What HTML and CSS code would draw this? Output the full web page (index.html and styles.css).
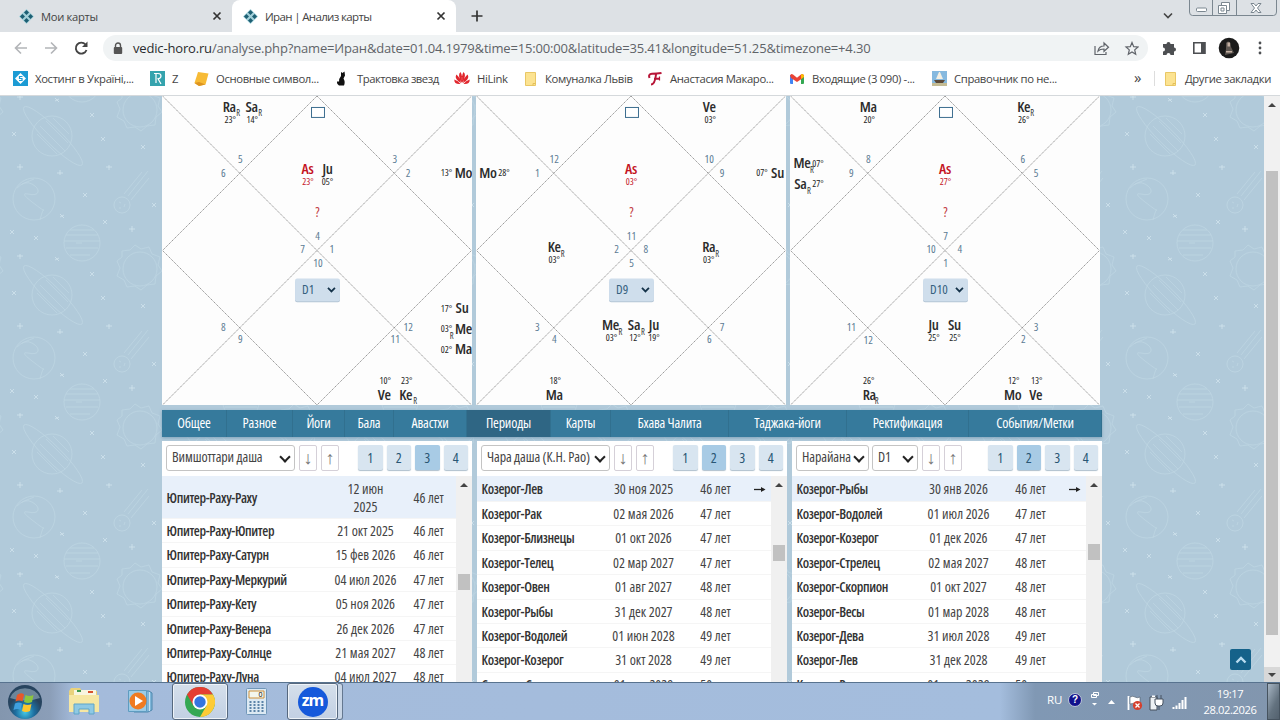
FILE: index.html
```html
<!DOCTYPE html>
<html lang="ru">
<head>
    <meta charset="UTF-8">
    <meta name="viewport" content="width=device-width, initial-scale=1.0">
    <title>Иран | Анализ карты</title>
    <link rel="stylesheet" href="styles.css">
</head>
<body>
    <!-- Общие символы -->
    <svg width="0" height="0" class="defs">
        <symbol id="favicon" viewBox="0 0 16 16">
            <path d="M8 0l8 8-8 8-8-8z" fill="#a3d0d9"/>
            <path d="M8 1l2.700 2.700L8 6.400 5.300 3.700zM3.700 5.300L6.400 8l-2.700 2.700L1 8zM12.300 5.300L15 8l-2.700 2.700L9.600 8zM8 9.600l2.700 2.700L8 15l-2.700-2.700z" fill="#1d5f73"/>
        </symbol>
        <symbol id="close" viewBox="0 0 10 10">
            <path d="M1.500 1.500l7 7M8.500 1.500l-7 7" stroke="#333" stroke-width="1.700"/>
        </symbol>
        <symbol id="note" viewBox="0 0 14 14">
            <path d="M1.500.5h10v13h-10z" fill="#fce391" stroke="#e9c765"/>
            <path d="M9 13.500v-2h2.500" fill="none" stroke="#e3bf58"/>
        </symbol>
        <symbol id="grid" viewBox="0 0 310 310">
            <path d="M0 0L310 310M310 0L0 310M155 0L310 155L155 310L0 155Z" fill="none" stroke="#808080" stroke-width=".8" stroke-dasharray="1.500 .7"/>
            <rect x="149.500" y="11.500" width="13" height="10" fill="#fff" stroke="#3c6d8f"/>
            <rect x="133" y="185" width="45" height="22" rx="2" fill="#b5c6d6"/>
            <rect x="133" y="183" width="45" height="23" rx="2" fill="#cfdeec"/>
            <path d="M166 192.500l3.500 3.500 3.500-3.500" fill="none" stroke="#15334a" stroke-width="1.800"/>
        </symbol>
    </svg>

    <!-- Вкладки -->
    <header class="tabs">
        <div class="tab tab-first"><svg width="15" height="15"><use href="#favicon"/></svg><span>Мои карты</span><svg class="x" width="10" height="10"><use href="#close"/></svg></div>
        <div class="tab active"><svg width="15" height="15"><use href="#favicon"/></svg><span>Иран | Анализ карты</span><svg class="x" width="10" height="10"><use href="#close"/></svg></div>
        <svg class="plus" width="12" height="12"><path d="M6 .5v11M.5 6h11" stroke="#333" stroke-width="1.700"/></svg>
        <svg class="chev" width="10" height="8"><path d="M1 1.500l4 4 4-4" fill="none" stroke="#444" stroke-width="1.600"/></svg>
        <svg class="winctl" width="88" height="16" fill="none" stroke="#7b8790">
            <path d="M.5 0v12q0 3.500 3 3.500h81q3 0 3-3.500V0M23.500 0v15M47.500 0v15"/>
            <rect x="7.500" y="8" width="10" height="3.500" rx="1" fill="#fff"/>
            <path d="M32.500 5V2.500h8v8H38M29.500 5.500h8v8h-8zM32 8h3v3h-3z" fill="#fff"/>
            <path d="M62 3.500h3l2 2.500 2-2.500h3l-3.500 4.500 3.500 4.500h-3l-2-2.500-2 2.500h-3l3.500-4.500z" fill="#fff"/>
        </svg>
    </header>

    <!-- Адресная строка -->
    <div class="toolbar">
        <svg class="nav" width="76" height="16" fill="none" stroke-width="1.600">
            <path d="M13 8H1.500M7 2.500L1.500 8 7 13.500M31 8h11.500M37 2.500L42.500 8 37 13.500" stroke="#b3b5b8"/>
            <path d="M71.500 4.500A5.500 5.500 0 1 0 72.500 10" stroke="#444" stroke-width="1.900"/>
            <path d="M73.500 1.500v5.500H68z" fill="#444"/>
        </svg>
        <div class="address">
            <svg width="10" height="13"><path d="M2.500 6V3.500a2.500 2.500 0 0 1 5 0V6" fill="none" stroke="#555" stroke-width="1.400"/><rect x=".8" y="5" width="8.400" height="7" rx="1" fill="#555"/></svg>
            <span class="url"><b>vedic-horo.ru</b>/analyse.php?name=Иран&amp;date=01.04.1979&amp;time=15:00:00&amp;latitude=35.41&amp;longitude=51.25&amp;timezone=+4.30</span>
            <svg class="share" width="46" height="15" fill="none" stroke="#60646a" stroke-width="1.200">
                <path d="M2 5v8.500h11V11M5 10q1-5 6-5V2l4.500 4.300-4.500 4V8q-4 0-6 2z"/>
                <path d="M39 1.500l1.700 4.200 4.300.3-3.300 2.900 1 4.400-3.700-2.400-3.700 2.400 1-4.400L33 6l4.300-.3z"/>
            </svg>
        </div>
        <svg class="ext" width="110" height="22">
            <path d="M1 7h3.500a2 2 0 1 1 4 0H12v3.500a2 2 0 1 1 0 4V18H8.500a2 2 0 0 0-4 0H1v-3.500a2 2 0 0 0 0-4z" fill="#4d4f52"/>
            <path d="M31.800 5.800h11v10.500h-11z" fill="none" stroke="#4d4f52" stroke-width="1.600"/><path d="M39 5h4.500v12H39z" fill="#4d4f52"/>
            <circle cx="67" cy="11" r="10.300" fill="#1b1b1b"/><path d="M64 6q2-3 4.500 0l.5 4 3 6-9 2 1-6z" fill="#5e5752"/><path d="M65.500 5.500h2.500v4h-2.500zM64 14h6v1.500h-6z" fill="#c4b0a2"/>
            <g fill="#4d4f52"><circle cx="98" cy="6" r="1.400"/><circle cx="98" cy="11" r="1.400"/><circle cx="98" cy="16" r="1.400"/></g>
        </svg>
    </div>

    <!-- Закладки -->
    <nav class="bookmarks">
        <div class="bm bm1"><svg width="15" height="15"><path d="M0 0h15v15H0z" fill="#1c9bd4"/><path d="M7.500 2l5.500 5.500L7.500 13 2 7.500z" fill="#fff"/><path d="M9.500 5.500h-3v2h2.500v2h-3" fill="none" stroke="#1c9bd4" stroke-width="1.200"/></svg><span>Хостинг в Україні,...</span></div>
        <div class="bm bm2"><svg width="15" height="15"><path d="M0 0h15v15H0z" fill="#35a3ad"/><path d="M4 2.500h4q3 0 3 2.500t-3 2.800L11 13M6 2.500V12" fill="none" stroke="#fff" stroke-width="1.200"/></svg><span>Z</span></div>
        <div class="bm bm3"><svg width="15" height="16"><path d="M4 1l10.500 1.500-3 11L5 15 .5 12z" fill="#f7bb36"/><path d="M.5 12l4.500-1 6.500 2.500L5 15z" fill="#dd9420"/></svg><span>Основные символ...</span></div>
        <div class="bm bm4"><svg width="12" height="15"><path d="M5 1l1.500 1L8.500.5l.5 4-1.500 3q2 3.500.5 7H3Q-.5 12 2 10l1 1Q3 7 5 5z" fill="#111"/></svg><span>Трактовка звезд</span></div>
        <div class="bm bm5"><svg width="16" height="15" fill="#e1262d"><path d="M7.700 12Q3 4 6.500 1q2.500 4 1.200 11zM8.300 12Q13 4 9.500 1 7 5 8.300 12zM7 12Q0 8 2.300 3.500 6 6 7 12zM9 12q7-4 4.700-8.500Q10 6 9 12zM6.500 13Q0 13.500.3 8.500q4 1 6.200 4.500zM9.500 13q6.500.5 6.200-4.500-4 1-6.200 4.500z"/></svg><span>HiLink</span></div>
        <div class="bm bm6"><svg width="14" height="14"><use href="#note"/></svg><span>Комуналка Львів</span></div>
        <div class="bm bm7"><svg width="14" height="14" fill="none" stroke="#b81638"><path d="M1.500 6Q0 2 4 1.800q5 0 9.500-.8M8 2.500Q7 12.500 3 12.500M6 6.800h6" stroke-width="2"/><path d="M11.500 4.500v4" stroke-width="1.200"/></svg><span>Анастасия Макаро...</span></div>
        <div class="bm bm8"><svg width="14" height="12"><path d="M0 2h3v9H1q-1 0-1-1z" fill="#4285f4"/><path d="M11 2h3v8q0 1-1 1h-2z" fill="#34a853"/><path d="M0 2.500Q1 0 3 1.500l4 3.300 4-3.300q2-1.500 3 1L13 5 7 9 1 5z" fill="#ea4335"/><path d="M11 1.500q2-1.500 3 1V4l-3 2z" fill="#fbbc04"/></svg><span>Входящие (3 090) -...</span></div>
        <div class="bm bm9"><svg width="15" height="15"><path d="M0 0h15v15H0z" fill="#86b9df"/><path d="M7 1L4 8h7L8 1z" fill="#f4efe2"/><path d="M2 9h11l-2 3H4z" fill="#5c4a3a"/><path d="M0 12h15v3H0z" fill="#c4bb93"/></svg><span>Справочник по не...</span></div>
        <div class="more">»</div>
        <div class="bm other"><svg width="14" height="14"><use href="#note"/></svg><span>Другие закладки</span></div>
    </nav>

    <!-- Страница -->
    <main class="page">
        <svg class="space" width="1264" height="586">
            <defs>
                <pattern id="cosmos" x="0" y="10" width="159" height="159" patternUnits="userSpaceOnUse">
                    <g fill="none" stroke="#c9dfea" stroke-width=".8" opacity=".5">
                        <circle cx="52" cy="30" r="20"/><ellipse cx="53" cy="30" rx="41" ry="8" transform="rotate(45 53 30)"/>
                        <path d="M40 20l25 25M46 15l22 22M37 28l20 20M53 12l16 16"/>
                        <circle cx="34" cy="93" r="21"/><path d="M17 82q8-8 15-4t6 8-10 2 4 8 12 8-4 10M22 78l12-5"/>
                        <circle cx="82" cy="137" r="18"/><path d="M70 124h24M66 129h32M64 135h36M66 142h32M70 149h20M76 137h6"/>
                        <circle cx="122" cy="99" r="8"/><path d="M124 88l18-22M128 90l20-25M131 94l18-22M119 96l2 1M125 98l-1 3M119 102l2 0"/>
                        <g id="sun"><circle cx="140" cy="163" r="17"/><path d="M122 145l8-1 5-5 6 4 8-2 3 7 8 3-2 8 4 6-6 5-1 8-8 1-6 5-6-4-8 1-3-7-7-4 3-8-3-7 5-4z"/></g>
                        <use href="#sun" x="-159"/><use href="#sun" y="-159"/><use href="#sun" x="-159" y="-159"/>
                    </g>
                    <path d="M17 61h6m-3-3v6M57 67h6m-3-3v5M106 61h6m-3-2v5M83 87l4 4m0-4l-4 4M152 97l4 4m0-4l-4 4M60 108l4 4m0-3l-4 2M103 114l4 4m0-4l-4 4M10 124l4 4m0-4l-4 4M34 130l4 4m0-4l-4 4M129 123h6m-3-3v6M17 150h6m-3-2v5M55 151l4 4m0-3l-4 2M12 26l4 4m0-4l-4 4M101 31l4 4m0-4l-4 4M90 7l4 4m0-4l-4 4M141 39l4 4m0-4l-4 4" stroke="#d5e7f0" fill="none" opacity=".7"/>
                </pattern>
            </defs>
            <rect width="1264" height="586" fill="url(#cosmos)"/>
        </svg>

        <div class="content">
            <div class="charts">
                <svg class="chart" viewBox="0 0 310 310" width="310" height="310">
                    <use href="#grid"/>
                    <g class="house">
                        <text x="78" y="67">5</text><text x="61" y="81">6</text><text x="233" y="67">3</text><text x="246.500" y="81">2</text>
                        <text x="155.500" y="144">4</text><text x="140.500" y="158">7</text><text x="170" y="158">1</text><text x="156" y="172">10</text>
                        <text x="61" y="236">8</text><text x="78" y="248">9</text><text x="246.500" y="236">12</text><text x="233.500" y="248">11</text>
                    </g>
                    <g class="graha">
                        <text x="67" y="16">Ra</text><text x="89.500" y="16">Sa</text><text class="as" x="145.500" y="78">As</text><text x="165.500" y="78">Ju</text>
                        <text x="302" y="82">Mo</text><text x="300.500" y="218">Su</text><text x="302" y="238.500">Me</text><text x="302" y="259">Ma</text>
                        <text x="222.500" y="305">Ve</text><text x="244" y="305">Ke</text>
                    </g>
                    <g class="deg">
                        <text x="68" y="27">23°</text><text x="90" y="27">14°</text><text class="as" x="146" y="89">23°</text><text x="165.500" y="89">05°</text>
                        <text x="285" y="80.500">13°</text><text x="285" y="216.500">17°</text><text x="285" y="237">03°</text><text x="285" y="257.500">02°</text>
                        <text x="223.500" y="288.500">10°</text><text x="245" y="288.500">23°</text>
                    </g>
                    <g class="retro"><text x="76" y="20.500">R</text><text x="98" y="20.500">R</text><text x="290" y="243.500">R</text><text x="253.500" y="308.500">R</text></g>
                    <text class="ask" x="155.500" y="121">?</text><text class="div" x="140" y="199">D1</text>
                </svg>
                <svg class="chart" viewBox="0 0 310 310" width="310" height="310">
                    <use href="#grid"/>
                    <g class="house">
                        <text x="78" y="67">12</text><text x="61" y="81">1</text><text x="233.500" y="67">10</text><text x="246.500" y="81">9</text>
                        <text x="155.500" y="144">11</text><text x="140.500" y="158">2</text><text x="170" y="158">8</text><text x="155.500" y="172">5</text>
                        <text x="61" y="236">3</text><text x="78" y="248">4</text><text x="246.500" y="236">7</text><text x="233.500" y="248">6</text>
                    </g>
                    <g class="graha">
                        <text x="233.500" y="16">Ve</text><text class="as" x="155" y="78">As</text><text x="11.500" y="82">Mo</text><text x="302" y="82">Su</text>
                        <text x="78" y="157">Ke</text><text x="233" y="157">Ra</text><text x="134.500" y="234.500">Me</text><text x="158" y="234.500">Sa</text><text x="178" y="234.500">Ju</text>
                        <text x="78" y="305">Ma</text>
                    </g>
                    <g class="deg">
                        <text x="234.500" y="27">03°</text><text class="as" x="155.500" y="89">03°</text><text x="27.500" y="80.500">28°</text><text x="286.500" y="80.500">07°</text>
                        <text x="78" y="168">03°</text><text x="233" y="168">03°</text><text x="135.500" y="245.500">03°</text><text x="159" y="245.500">12°</text><text x="178" y="245.500">19°</text>
                        <text x="79" y="288.500">18°</text>
                    </g>
                    <g class="retro"><text x="86.500" y="161.500">R</text><text x="241.500" y="161.500">R</text><text x="144.500" y="239.500">R</text><text x="167" y="239.500">R</text></g>
                    <text class="ask" x="155.500" y="121">?</text><text class="div" x="140" y="199">D9</text>
                </svg>
                <svg class="chart" viewBox="0 0 310 310" width="310" height="310">
                    <use href="#grid"/>
                    <g class="house">
                        <text x="78" y="67">8</text><text x="61" y="81">9</text><text x="233" y="67">6</text><text x="246.500" y="81">5</text>
                        <text x="155.500" y="144">7</text><text x="141" y="158">10</text><text x="170" y="158">4</text><text x="155.500" y="172">1</text>
                        <text x="61" y="236">11</text><text x="78" y="248.500">12</text><text x="246.500" y="236">3</text><text x="233.500" y="248">2</text>
                    </g>
                    <g class="graha">
                        <text x="78" y="16">Ma</text><text x="234" y="16">Ke</text><text class="as" x="155" y="78">As</text>
                        <text x="11.500" y="72.500">Me</text><text x="10" y="93">Sa</text><text x="143.500" y="234.500">Ju</text><text x="164.500" y="234.500">Su</text>
                        <text x="79" y="305">Ra</text><text x="223" y="305">Mo</text><text x="246" y="305">Ve</text>
                    </g>
                    <g class="deg">
                        <text x="79" y="27">20°</text><text x="234" y="27">26°</text><text class="as" x="155.500" y="89">27°</text>
                        <text x="27.500" y="71">07°</text><text x="27.500" y="91.500">27°</text><text x="144" y="245.500">25°</text><text x="165" y="245.500">25°</text>
                        <text x="78.500" y="288.500">26°</text><text x="224" y="288.500">12°</text><text x="247" y="288.500">13°</text>
                    </g>
                    <g class="retro"><text x="242.500" y="20.500">R</text><text x="21.500" y="77.500">R</text><text x="18.500" y="98">R</text><text x="86.500" y="308.500">R</text></g>
                    <text class="ask" x="155.500" y="121">?</text><text class="div" x="140" y="199">D10</text>
                </svg>
            </div>

            <nav class="menu">
                <a class="m1">Общее</a><a class="m2">Разное</a><a class="m3">Йоги</a><a class="m4">Бала</a><a class="m5">Авастхи</a><a class="m6 current">Периоды</a><a class="m7">Карты</a><a class="m8">Бхава Чалита</a><a class="m9">Таджака-йоги</a><a class="m10">Ректификация</a><a class="m11">События/Метки</a>
            </nav>

            <div class="periods">
                <section class="panel wide-date">
                    <div class="controls">
                        <div class="select s129"><span>Вимшоттари даша</span></div><i class="btn">↓</i><i class="btn">↑</i>
                        <div class="levels"><b>1</b><b>2</b><b class="on">3</b><b>4</b></div>
                    </div>
                    <div class="list">
                        <div class="rows">
                            <div class="row now tall"><strong>Юпитер-Раху-Раху</strong><span>12 июн<br>2025</span><em>46 лет</em></div>
                            <div class="row"><strong>Юпитер-Раху-Юпитер</strong><span>21 окт 2025</span><em>46 лет</em></div>
                            <div class="row"><strong>Юпитер-Раху-Сатурн</strong><span>15 фев 2026</span><em>46 лет</em></div>
                            <div class="row"><strong>Юпитер-Раху-Меркурий</strong><span>04 июл 2026</span><em>47 лет</em></div>
                            <div class="row"><strong>Юпитер-Раху-Кету</strong><span>05 ноя 2026</span><em>47 лет</em></div>
                            <div class="row"><strong>Юпитер-Раху-Венера</strong><span>26 дек 2026</span><em>47 лет</em></div>
                            <div class="row"><strong>Юпитер-Раху-Солнце</strong><span>21 мая 2027</span><em>48 лет</em></div>
                            <div class="row"><strong>Юпитер-Раху-Луна</strong><span>04 июл 2027</span><em>48 лет</em></div>
                        </div>
                        <div class="scroll"><i class="up"></i><i class="thumb t1"></i></div>
                    </div>
                </section>
                <section class="panel">
                    <div class="controls">
                        <div class="select s129"><span>Чара даша (К.Н. Рао)</span></div><i class="btn">↓</i><i class="btn">↑</i>
                        <div class="levels"><b>1</b><b class="on">2</b><b>3</b><b>4</b></div>
                    </div>
                    <div class="list">
                        <div class="rows">
                            <div class="row now"><strong>Козерог-Лев</strong><span>30 ноя 2025</span><em>46 лет</em><svg class="go" width="12" height="7"><path d="M0 3.500h8" stroke="#222" stroke-width="1.300"/><path d="M7 1l4.500 2.500L7 6z" fill="#222"/></svg></div>
                            <div class="row"><strong>Козерог-Рак</strong><span>02 мая 2026</span><em>47 лет</em></div>
                            <div class="row"><strong>Козерог-Близнецы</strong><span>01 окт 2026</span><em>47 лет</em></div>
                            <div class="row"><strong>Козерог-Телец</strong><span>02 мар 2027</span><em>47 лет</em></div>
                            <div class="row"><strong>Козерог-Овен</strong><span>01 авг 2027</span><em>48 лет</em></div>
                            <div class="row"><strong>Козерог-Рыбы</strong><span>31 дек 2027</span><em>48 лет</em></div>
                            <div class="row"><strong>Козерог-Водолей</strong><span>01 июн 2028</span><em>49 лет</em></div>
                            <div class="row"><strong>Козерог-Козерог</strong><span>31 окт 2028</span><em>49 лет</em></div>
                            <div class="row"><strong>Стрелец-Скорпион</strong><span>01 апр 2029</span><em>50 лет</em></div>
                        </div>
                        <div class="scroll"><i class="up"></i><i class="thumb t2"></i></div>
                    </div>
                </section>
                <section class="panel">
                    <div class="controls">
                        <div class="select s73"><span>Нарайана</span></div><div class="select s46"><span>D1</span></div><i class="btn">↓</i><i class="btn">↑</i>
                        <div class="levels"><b>1</b><b class="on">2</b><b>3</b><b>4</b></div>
                    </div>
                    <div class="list">
                        <div class="rows">
                            <div class="row now"><strong>Козерог-Рыбы</strong><span>30 янв 2026</span><em>46 лет</em><svg class="go" width="12" height="7"><path d="M0 3.500h8" stroke="#222" stroke-width="1.300"/><path d="M7 1l4.500 2.500L7 6z" fill="#222"/></svg></div>
                            <div class="row"><strong>Козерог-Водолей</strong><span>01 июл 2026</span><em>47 лет</em></div>
                            <div class="row"><strong>Козерог-Козерог</strong><span>01 дек 2026</span><em>47 лет</em></div>
                            <div class="row"><strong>Козерог-Стрелец</strong><span>02 мая 2027</span><em>48 лет</em></div>
                            <div class="row"><strong>Козерог-Скорпион</strong><span>01 окт 2027</span><em>48 лет</em></div>
                            <div class="row"><strong>Козерог-Весы</strong><span>01 мар 2028</span><em>48 лет</em></div>
                            <div class="row"><strong>Козерог-Дева</strong><span>31 июл 2028</span><em>49 лет</em></div>
                            <div class="row"><strong>Козерог-Лев</strong><span>31 дек 2028</span><em>49 лет</em></div>
                            <div class="row"><strong>Козерог-Рак</strong><span>01 июн 2029</span><em>50 лет</em></div>
                        </div>
                        <div class="scroll"><i class="up"></i><i class="thumb t3"></i></div>
                    </div>
                </section>
            </div>
        </div>

        <div class="page-scroll"><i class="up"></i><i class="bar"></i><div class="down-box"><i class="down"></i></div></div>
        <div class="to-top"><svg width="12" height="8"><path d="M1.500 6.500L6 2l4.500 4.500" fill="none" stroke="#b9dcf0" stroke-width="2.400"/></svg></div>
    </main>

    <!-- Панель задач -->
    <footer class="taskbar">
        <svg class="orb" width="36" height="36">
            <defs><radialGradient id="orb" cy=".8"><stop offset="0" stop-color="#45c8e6"/><stop offset=".55" stop-color="#1d6ea0"/><stop offset="1" stop-color="#27445f"/></radialGradient></defs>
            <circle cx="18" cy="18" r="17" fill="url(#orb)"/><path d="M3 14a15.500 13 0 0 1 30 0q-15 5-30 0z" fill="#a5bccb" opacity=".55"/>
            <path d="M10 11q4-3 7-.5l-1.500 7q-3-2-7 0z" fill="#e8582a"/><path d="M18.500 11q4 2 8 0L25 18q-4 2-8 0z" fill="#8cc63f"/>
            <path d="M8 19.500q4-2 7 0l-1.500 6.500q-3-2-7 0z" fill="#3fa0e0"/><path d="M16.500 20q4 2 8 0L23 27q-4 2-8 0z" fill="#fdc62e"/>
        </svg>
        <svg class="explorer" width="32" height="29">
            <path d="M1 4l2-3h9l2 3h15v21H1z" fill="#e9d27c"/><path d="M6 3h22v6H6z" fill="#f8f5df"/><path d="M9 3h4v2H9z" fill="#3e9b4c"/><path d="M20 4h5v2h-5z" fill="#d8502d"/>
            <path d="M1 8h30v17H1z" fill="#f6e7a3"/><path d="M6 27V17h20v10h-5v-5H11v5z" fill="#8ec9e4" stroke="#5ea5c8"/>
        </svg>
        <svg class="player" width="27" height="26"><path d="M6 2h15l3 2v17l-4 2H6z" fill="#7fb6d9" stroke="#4d87ad"/><path d="M.5 1.500h18v21H.5z" fill="#9bcbe6" stroke="#5e9cc0"/><path d="M21.500 3v19" stroke="#c8e2f1"/><circle cx="10" cy="12" r="8.500" fill="#ef7b22"/><path d="M7 7l8 5-8 5z" fill="#fff"/></svg>
        <div class="task chrome-task"><svg width="30" height="30" viewBox="0 0 30 30">
            <circle cx="15" cy="15" r="15" fill="#34a853"/><path d="M2 7.500A15 15 0 0 1 28 7.500H15L8.500 18.800z" fill="#e53e32"/><path d="M28 7.500A15 15 0 0 1 15 30L21.500 18.800 15 7.500z" fill="#fdcb36"/>
            <circle cx="15" cy="15" r="7.500" fill="#fff"/><circle cx="15" cy="15" r="5.700" fill="#3475e0"/></svg></div>
        <svg class="calc" width="22" height="28"><rect x=".5" y=".5" width="20" height="26" rx="1" fill="#dce9f3" stroke="#7096b8"/><path d="M3 3h15v7H3z" fill="#f3f6ef" stroke="#d0913b"/><path d="M3.500 14h2m2 0h2m2 0h2m2 0h2M3.500 17h2m2 0h2m2 0h2m2 0h2M3.500 20h2m2 0h2m2 0h2m2 0h2M3.500 23h2m2 0h2m2 0h2m2 0h2" stroke="#5b83a8" stroke-width="2"/><text x="12.500" y="9" font-size="7">0</text></svg>
        <div class="task zoom-task"><div class="zm">zm</div></div><div class="task-edge"></div>
        <div class="tray">
            <span class="lang">RU</span>
            <div class="help">?</div>
            <svg width="55" height="24" class="icons1" fill="none">
                <path d="M4.500 2.500h5v3h-5zM2.500 4.500h5v3h-5z" stroke="#fff"/><path d="M3 13h5l-2.500 2.500z" fill="#fff"/><path d="M19 14h7l-3.500-4z" fill="#fff"/>
                <path d="M39.500 6v14" stroke="#fff" stroke-width="1.800"/><path d="M41 7q3-1.500 5 0t5 0v7q-3 1-5 0t-5 0z" fill="#fff" stroke="#4b5764" stroke-width=".6"/><circle cx="48.500" cy="15.500" r="4.600" fill="#d5402e"/><path d="M46.500 13.500l4 4m0-4l-4 4" stroke="#fff" stroke-width="1.300"/>
            </svg>
            <svg width="40" height="24" class="icons2" fill="none">
                <path d="M2 7h7v13H2z" fill="#eef2f5" stroke="#444f5a"/><path d="M4 5.500h3V7H4z" fill="#fff"/><path d="M7 9h8v4q0 3-3 3h-2q-3 0-3-3zM9 5v4m4-4v4M11 16v4" fill="#fff" stroke="#465260"/>
                <path d="M25.500 17v2M28.500 15.500V19M31.500 13v6M34.500 10v9M37.500 7v12" stroke="#fff" stroke-width="2"/>
            </svg>
            <div class="clock">19:17<br>28.02.2026</div>
            <div class="desk"></div>
        </div>
    </footer>
</body>
</html>
```
FILE: styles.css
```css
* {
    box-sizing: border-box;
}
body {
    margin: 0;
    width: 1280px;
    height: 720px;
    overflow: hidden;
    display: flex;
    flex-direction: column;
    font-family: "Open Sans", "Noto Sans", sans-serif;
    color: #444;
}
svg {
    display: block;
    flex: none;
}
.defs {
    position: absolute;
}

/* Вкладки */
.tabs {
    height: 32px;
    flex: none;
    display: flex;
    align-items: center;
    background: #dde1e5;
}
.tab {
    height: 32px;
    width: 224px;
    display: flex;
    align-items: center;
    padding: 0 10px 0 11px;
    font-size: 11.5px;
    letter-spacing: -0.65px;
}
.tab-first {
    width: 232px;
    padding-left: 19px;
}
.tab span {
    margin-left: 7px;
}
.tab-first span {
    letter-spacing: -0.3px;
    font-size: 11.2px;
}
.tab .x {
    margin-left: auto;
}
.tab.active {
    background: #fff;
    border-radius: 8px 8px 0 0;
}
.plus {
    margin-left: 15px;
}
.chev {
    margin-left: auto;
}
.winctl {
    margin: 0 3px 16px 16px;
}

/* Адресная строка */
.toolbar {
    height: 32px;
    flex: none;
    display: flex;
    align-items: center;
    background: #fff;
}
.nav {
    margin-left: 14px;
}
.address {
    margin-left: 13px;
    width: 1045px;
    height: 26px;
    border-radius: 13px;
    background: #f0f3f4;
    display: flex;
    align-items: center;
    padding: 0 9px 0 10px;
}
.url {
    margin-left: 10px;
    font-size: 13px;
    letter-spacing: -0.165px;
    color: #5f6368;
    white-space: nowrap;
}
.url b {
    font-weight: 400;
    color: #2a2c2e;
}
.share {
    margin-left: auto;
}
.ext {
    margin-left: 14px;
}

/* Закладки */
.bookmarks {
    height: 32px;
    flex: none;
    display: flex;
    align-items: center;
    background: #fff;
    border-bottom: 1px solid #d5d9dc;
    padding: 0 9px 2px 13px;
    font-size: 11.3px;
    letter-spacing: -0.36px;
}
.bm {
    display: flex;
    align-items: center;
    gap: 7px;
    flex: none;
    white-space: nowrap;
}
.bm1 { width: 137px; }
.bm2 { width: 44px; }
.bm3 { width: 142px; }
.bm4 { width: 118px; gap: 9px; }
.bm4 span { letter-spacing: -0.5px; }
.bm5 { width: 70px; }
.bm6 { width: 124px; }
.bm7 { width: 142px; gap: 8px; }
.bm8 { width: 142px; gap: 8px; }
.more {
    margin-left: auto;
    width: 20px;
    font-size: 15px;
    line-height: 14px;
    padding-bottom: 3px;
}
.other {
    padding-left: 9px;
    border-left: 1px solid #ddd;
}

/* Страница */
.page {
    position: relative;
    height: 586px;
    flex: none;
    overflow: hidden;
    background: #b1cada;
    display: flex;
    font-stretch: 75%;
}
.space {
    position: absolute;
    left: 0;
    top: 0;
}
.content {
    position: relative;
    margin-left: 162px;
    width: 940px;
}
.charts {
    display: flex;
    gap: 4px;
    height: 309px;
}
.chart {
    background: #fdfdfd;
    height: 309px;
}
.chart text {
    text-anchor: middle;
}
.house {
    font-size: 11px;
    fill: #5b7b93;
}
.graha {
    font-size: 15px;
    font-weight: 600;
    letter-spacing: -0.3px;
    fill: #2c2c2c;
}
.deg {
    font-size: 9.5px;
    fill: #222;
}
.retro {
    font-size: 8.5px;
    fill: #333;
}
.chart .as {
    fill: #c4141f;
}
.ask {
    font-size: 14px;
    fill: #c23a40;
}
.chart .div {
    font-size: 13px;
    text-anchor: start;
    fill: #34607e;
}
.menu {
    display: flex;
    margin-top: 5px;
    height: 27px;
    background: #367a9c;
    box-shadow: 0 1px 3px #7fa3bb;
    color: #fff;
    font-size: 14px;
    letter-spacing: -0.2px;
    line-height: 25px;
    text-align: center;
}
.menu a {
    border-right: 1px solid #31708f;
}
.menu .current {
    background: #2f6684;
}
.m1 { width: 65px; }
.m2 { width: 66px; }
.m3 { width: 52px; }
.m4 { width: 49px; }
.m5 { width: 73px; }
.m6 { width: 84px; }
.m7 { width: 60px; }
.m8 { width: 118px; }
.m9 { width: 118px; }
.m10 { width: 122px; }
.m11 { width: 133px; }

/* Периоды */
.periods {
    display: flex;
    gap: 5px;
    margin-top: 4px;
}
.panel {
    width: 310px;
    height: 241px;
    background: #fff;
}
.controls {
    display: flex;
    gap: 4px;
    height: 35px;
    padding: 4px 4px 5px;
}
.select {
    height: 26px;
    border: 1px solid #c4c4c4;
    border-radius: 3px;
    padding: 0 5px;
    display: flex;
    align-items: center;
    justify-content: space-between;
    font-size: 14px;
    line-height: 22px;
    overflow: hidden;
}
.select span {
    white-space: nowrap;
    overflow: hidden;
    padding-bottom: 2px;
    letter-spacing: -0.1px;
}
.select::after {
    content: "";
    flex: none;
    width: 6px;
    height: 6px;
    border: solid #222;
    border-width: 0 2px 2px 0;
    transform: rotate(45deg);
    margin: -3px 0 0 3px;
}
.s129 { width: 129px; }
.s73 { width: 73px; }
.s46 { width: 46px; margin-left: -1px; }
.btn {
    width: 18px;
    height: 26px;
    border: 1px solid #d5d0d8;
    border-radius: 2px;
    font: 18px/25px "Liberation Sans", sans-serif;
    color: #777;
    text-align: center;
}
.levels {
    display: flex;
    gap: 4px;
    margin-left: auto;
}
.levels b {
    width: 24.5px;
    height: 25px;
    background: #d8e5f0;
    box-shadow: 0 1px 1px #aebfcd;
    border-radius: 2px;
    font-size: 14px;
    font-weight: 400;
    line-height: 25px;
    text-align: center;
    color: #285674;
}
.levels .on {
    background: #a8cbe5;
}
.list {
    display: flex;
    height: 206px;
    overflow: hidden;
}
.rows {
    width: 294px;
}
.row {
    display: flex;
    align-items: center;
    height: 24.4px;
    padding-left: 4.5px;
    border-bottom: 1px solid #f5f5f5;
    font-size: 14px;
    line-height: 17.5px;
    color: #444;
}
.row strong {
    width: 126px;
    font-size: 13.8px;
    font-weight: 600;
    letter-spacing: -0.38px;
    color: #333;
    white-space: nowrap;
}
.wide-date strong {
    width: 164px;
}
.row span {
    width: 72px;
    text-align: center;
}
.row em {
    width: 72px;
    font-style: normal;
    text-align: center;
}
.wide-date em {
    width: 55px;
}
.row.now {
    height: 26px;
    padding-top: 1px;
    background: #e8f0fa;
}
.row.tall {
    height: 43px;
}
.go {
    margin-left: 2px;
}
.scroll {
    width: 16px;
    background: #f0f0f0;
    display: flex;
    flex-direction: column;
    align-items: center;
}
.up, .down {
    border: 4px solid transparent;
    border-top: 0;
    border-bottom: 4px solid #444;
    margin-top: 7px;
}
.thumb {
    width: 12px;
    height: 16px;
    background: #c1c1c1;
}
.t1 { margin-top: 87px; }
.t2 { margin-top: 58px; }
.t3 { margin-top: 57px; }

.page-scroll {
    position: relative;
    margin-left: auto;
    width: 16px;
    background: #f1f1f1;
    display: flex;
    flex-direction: column;
    align-items: center;
}
.bar {
    margin-top: 64px;
    width: 12px;
    height: 464px;
    background: #c1c1c1;
}
.down-box {
    margin-top: auto;
    width: 16px;
    height: 15px;
    background: #d8d8d8;
    display: flex;
    justify-content: center;
    align-items: center;
}
.down {
    margin: 0;
    border-top: 4px solid #444;
    border-bottom: 0;
}
.to-top {
    position: absolute;
    left: 1230px;
    top: 553px;
    width: 21px;
    height: 21px;
    border-radius: 2px;
    background: #15628a;
    display: flex;
    align-items: center;
    justify-content: center;
}

/* Панель задач */
.taskbar {
    height: 38px;
    flex: none;
    display: flex;
    align-items: center;
    border-top: 1px solid #58738f;
    background: linear-gradient(90deg, #8396ae 0, #8b9eb8 50px, #a4bbdb 75px, #a4bddd 1000px, #8098b4 1035px, #8296ae 1280px);
}
.orb { margin-left: 7px; }
.explorer { margin-left: 25px; }
.player { margin: 0 0 0 28px; }
.task {
    height: 37px;
    border: 1px solid #56687e;
    border-radius: 3px;
    background: linear-gradient(#d5dfeb, #c2d0e3);
    box-shadow: inset 0 0 0 1px #eef3f8;
    display: flex;
    align-items: center;
    justify-content: center;
}
.chrome-task {
    width: 56px;
    margin-left: 17px;
}
.calc { margin-left: 18px; }
.zoom-task {
    width: 51px;
    margin-left: 19px;
}
.task-edge {
    width: 5px;
    height: 37px;
    border: 1px solid #647890;
    border-left: 0;
    border-radius: 0 3px 3px 0;
    background: #c9d6e6;
}
.zm {
    width: 30px;
    height: 30px;
    border-radius: 50%;
    background: #1559db;
    color: #fff;
    font: bold 16px/27px "Open Sans", sans-serif;
    letter-spacing: -1px;
    text-align: center;
}
.tray {
    margin-left: auto;
    display: flex;
    align-items: center;
    height: 37px;
    color: #fff;
    font-size: 11.5px;
}
.lang {
    letter-spacing: -0.3px;
    padding-bottom: 5px;
}
.help {
    width: 14px;
    height: 14px;
    margin: 0 0 3px 6px;
    border-radius: 50%;
    background: #11118c;
    border: 1px solid #bcc7d8;
    font: bold 10px/12px "Liberation Sans", sans-serif;
    text-align: center;
}
.icons1 { margin-left: 7px; }
.icons2 { margin-left: 4px; }
.clock {
    width: 66px;
    margin-left: 9px;
    text-align: center;
    line-height: 15.5px;
    font-size: 11.2px;
    letter-spacing: -0.4px;
    white-space: nowrap;
}
.desk {
    width: 13px;
    height: 37px;
    margin-left: 4px;
    border: 1px solid #46535f;
    background: linear-gradient(115deg, #a7b5c3, #63727f 60%, #53616e);
}
```
